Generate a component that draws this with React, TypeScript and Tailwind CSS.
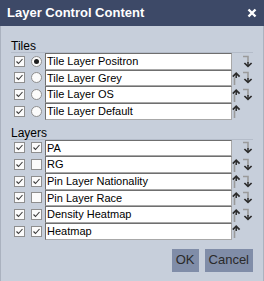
import React from 'react';

const tiles = [
  { name: 'Tile Layer Positron', selected: true },
  { name: 'Tile Layer Grey', selected: false },
  { name: 'Tile Layer OS', selected: false },
  { name: 'Tile Layer Default', selected: false },
];

const layers = [
  { name: 'PA', on: true },
  { name: 'RG', on: false },
  { name: 'Pin Layer Nationality', on: true },
  { name: 'Pin Layer Race', on: false },
  { name: 'Density Heatmap', on: true },
  { name: 'Heatmap', on: true },
];

const CheckBox = ({ checked }: { checked: boolean }) => (
  <div className="w-[11px] h-[11px] shrink-0 bg-[#fbfbfb] border border-[#8e8e8e] flex items-center justify-center">
    {checked && (
      <svg width="9" height="9" viewBox="0 0 9 9">
        <path d="M1.5 4.5 L3.5 6.5 L7.5 2" fill="none" stroke="#3a3a3a" strokeWidth="1.1" />
      </svg>
    )}
  </div>
);

const Radio = ({ checked }: { checked: boolean }) => (
  <div className="w-[11px] h-[11px] shrink-0 rounded-full bg-[#fbfbfb] border border-[#8e8e8e] flex items-center justify-center">
    {checked && <div className="w-[5px] h-[5px] rounded-full bg-[#1e1e1e]" />}
  </div>
);

const UpArrow = () => (
  <svg width="9" height="15" viewBox="0 0 9 15">
    <path d="M2.5 6.5 V14" fill="none" stroke="#9a9a9a" strokeWidth="1.6" />
    <path d="M0.8 5.6 L4.2 2.2 L7.6 5.6" fill="none" stroke="#2b2b2b" strokeWidth="1.7" />
    <path d="M4.2 3 V7" fill="none" stroke="#2b2b2b" strokeWidth="1.5" />
  </svg>
);

const DownArrow = () => (
  <svg width="11" height="13" viewBox="0 0 11 13">
    <path d="M1 1.5 H6 V8" fill="none" stroke="#9a9a9a" strokeWidth="1.6" />
    <path d="M2.4 8 L6 11.4 L9.6 8" fill="none" stroke="#2b2b2b" strokeWidth="1.7" />
    <path d="M6 7 V10.6" fill="none" stroke="#2b2b2b" strokeWidth="1.5" />
  </svg>
);

const Row = ({
  first,
  second,
  name,
  up,
  down,
}: {
  first: React.ReactNode;
  second: React.ReactNode;
  name: string;
  up: boolean;
  down: boolean;
}) => (
  <div className="flex items-center h-[16.67px]">
    <div className="w-[13px] shrink-0" />
    {first}
    <div className="w-[6px] shrink-0" />
    {second}
    <div className="w-[3px] shrink-0" />
    <div className="w-[187px] h-full shrink-0 bg-white border-t border-l border-t-[#6f6f6f] border-l-[#6f6f6f] border-r border-b border-r-[#a8a8a8] border-b-[#a8a8a8] pl-[1px] text-[11px] leading-[14px] text-black whitespace-nowrap overflow-hidden">
      {name}
    </div>
    <div className="w-[10px] shrink-0 flex justify-start pt-[1px]">{up && <UpArrow />}</div>
    <div className="w-[11px] shrink-0 flex justify-start">{down && <DownArrow />}</div>
  </div>
);

const Heading = ({ label }: { label: string }) => (
  <div className="ml-[10px] mr-[10px] text-[12px] leading-[12px] text-black border-b border-[#b4bcc9]">
    {label}
  </div>
);

export default function App() {
  return (
    <div
      className="w-[264px] h-[281px] flex flex-col bg-[#c7cfdb]"
      style={{ fontFamily: '"Liberation Sans", Arial, sans-serif' }}
    >
      {/* Header */}
      <div className="h-[26px] shrink-0 bg-[#3d4967] flex items-center justify-between pl-[7px] pr-[7px]">
        <span className="text-white font-bold text-[13px]">Layer Control Content</span>
        <svg width="10" height="10" viewBox="0 0 10 10">
          <path d="M1.5 1.5 L8.5 8.5 M8.5 1.5 L1.5 8.5" stroke="#ffffff" strokeWidth="2.4" />
        </svg>
      </div>

      {/* Body */}
      <div className="flex-1 flex flex-col border-l border-r border-[#aab2bf] pt-[14px]">
        <Heading label="Tiles" />
        <div className="flex flex-col">
          {tiles.map((t, i) => (
            <Row
              key={t.name}
              first={<CheckBox checked />}
              second={<Radio checked={t.selected} />}
              name={t.name}
              up={i > 0}
              down={i < tiles.length - 1}
            />
          ))}
        </div>

        <div className="h-[7px]" />
        <Heading label="Layers" />
        <div className="flex flex-col">
          {layers.map((l, i) => (
            <Row
              key={l.name}
              first={<CheckBox checked />}
              second={<CheckBox checked={l.on} />}
              name={l.name}
              up={i > 0}
              down={i < layers.length - 1}
            />
          ))}
        </div>

        <div className="flex justify-end gap-[6px] mt-[9px] pr-[10px]">
          <button className="h-[23px] px-[4px] bg-[#808da8] text-[13px] text-[#2a2a2a]">OK</button>
          <button className="h-[23px] px-[4px] bg-[#808da8] text-[13px] text-[#2a2a2a]">Cancel</button>
        </div>
      </div>
    </div>
  );
}
